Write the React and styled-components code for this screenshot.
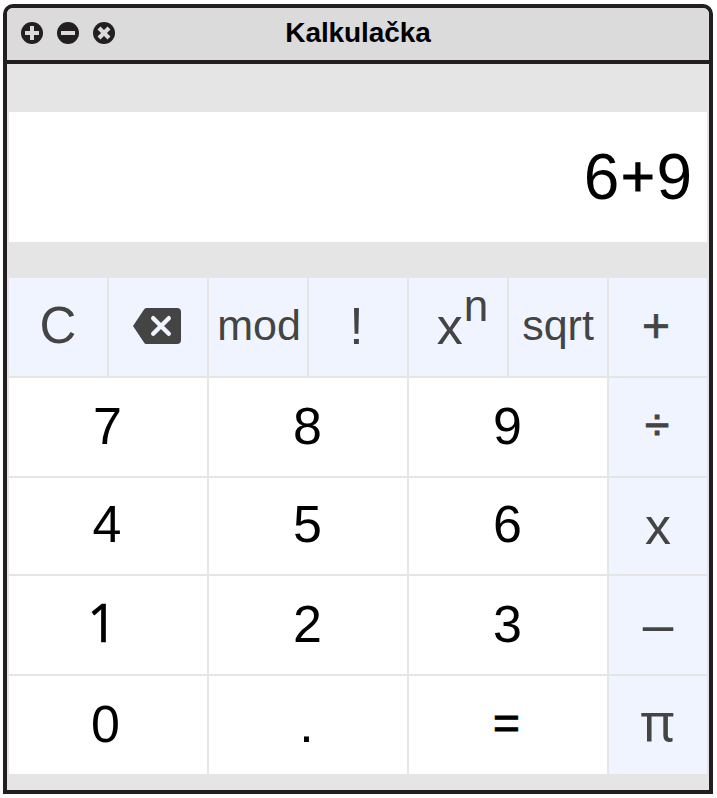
import React from "react";
import styled, { createGlobalStyle } from "styled-components";

const GlobalStyle = createGlobalStyle`
  * { box-sizing: border-box; }
  body { margin: 0; background: #fff; font-family: "Liberation Sans", Arial, sans-serif; }
`;

const Window = styled.main`
  width: 710px;
  height: 790px;
  margin: 4px 0 0 3px;
  border: 4px solid #231f20;
  border-radius: 10px 10px 0 0;
  background: #e5e5e5;
  overflow: hidden;
`;

const TitleBar = styled.header`
  display: grid;
  grid-template-columns: 1fr auto 1fr;
  align-items: center;
  height: 56px;
  padding: 0 14px;
  border-bottom: 4px solid #231f20;
  background: #dbdbdb;
`;

const Controls = styled.div`
  display: flex;
  gap: 14px;
  padding-bottom: 2px;
  svg { display: block; }
`;

const Title = styled.h1`
  margin: 0;
  padding-bottom: 2px;
  font-size: 28px;
  line-height: 32px;
  letter-spacing: -0.1px;
  font-weight: 700;
  color: #000;
`;

const Display = styled.output`
  display: flex;
  align-items: center;
  justify-content: flex-end;
  height: 130px;
  margin: 48px 2px 36px;
  padding-right: 15px;
  background: #fff;
  color: #000;
  font-size: 64px;
  line-height: 74px;
`;

const DisplayOperator = styled.span`
  width: 37px;
  padding-bottom: 2px;
  text-align: center;
  font-size: 58px;
  -webkit-text-stroke: 1px #000;
`;

const Keypad = styled.div`
  display: grid;
  grid-template-columns: repeat(7, 98px);
  grid-template-rows: 98px 98px 96px 98px 98px;
  gap: 2px;
  padding: 0 2px;
`;

const Key = styled.button`
  display: flex;
  align-items: center;
  justify-content: center;
  grid-column: span ${(p) => (p.$digit ? 2 : 1)};
  min-width: 0;
  margin: 0;
  border: 0;
  padding: ${(p) => p.$pad || (p.$digit ? "0 1px 3px 0" : "0 0 3px")};
  background: ${(p) => (p.$digit ? "#fff" : "#f0f4ff")};
  color: ${(p) => (p.$digit ? "#000" : "#444")};
  font-family: ${(p) => (p.$open ? '"Noto Sans", sans-serif' : "inherit")};
  font-size: ${(p) => p.$size || 52}px;
  line-height: 60px;
  white-space: nowrap;
  -webkit-text-stroke: ${(p) => p.$weight || 0}px currentColor;
`;

const Power = styled.span`
  display: flex;
  align-items: flex-start;
  gap: 1px;
`;

const Exponent = styled.span`
  font-size: 44px;
  line-height: 20px;
`;

const ControlIcon = ({ children }) => (
  <svg width="22" height="22" viewBox="0 0 22 22" aria-hidden="true">
    <circle cx="11" cy="11" r="11" fill="#231f20" />
    {children}
  </svg>
);

const BackspaceIcon = () => (
  <svg width="48" height="36" viewBox="0 0 48 36" aria-hidden="true">
    <path d="M13 0H44Q48 0 48 4V32Q48 36 44 36H13Q12 36 11 34.5L0 18L11 1.5Q12 0 13 0Z" fill="#444" />
    <path d="M20.2 10.2L35.8 25.8M35.8 10.2L20.2 25.8" stroke="#f0f4ff" strokeWidth="4.4" strokeLinecap="round" />
  </svg>
);

const keys = [
  { label: "C", size: 51, pad: "0 0 2px" },
  { label: "backspace", content: <BackspaceIcon />, pad: "0 2px 2px 0" },
  { label: "mod", size: 43, pad: "0 0 4px 2px" },
  { label: "!", pad: "0 3px 3px 0" },
  { label: "power", content: <Power>x<Exponent>n</Exponent></Power>, pad: "0 0 3px 9px" },
  { label: "sqrt", size: 43, pad: "0 0 4px" },
  { label: "+", size: 48, weight: 0.7, pad: "0 4px 2px 0" },
  { label: "7", digit: true },
  { label: "8", digit: true },
  { label: "9", digit: true },
  { label: "÷", size: 44, weight: 1.2, pad: "0 2px 5px 0" },
  { label: "4", digit: true, pad: "0 2px 5px 0" },
  { label: "5", digit: true, pad: "0 1px 5px 0" },
  { label: "6", digit: true, pad: "0 1px 5px 0" },
  { label: "x" , pad: "0" },
  { label: "1", digit: true, open: true, weight: 0.5, pad: "0 12px 6px 0" },
  { label: "2", digit: true },
  { label: "3", digit: true },
  { label: "–", size: 55 },
  { label: "0", digit: true, pad: "0 5px 3px 0" },
  { label: ".", digit: true, pad: "0 3px 3px 0" },
  { label: "=", digit: true, size: 46, weight: 1, pad: "0 3px 4px 0" },
  { label: "π", open: true, pad: "0 1px 8px 0" },
];

export default function App() {
  return (
    <>
      <GlobalStyle />
      <Window>
        <TitleBar>
          <Controls>
            <ControlIcon>
              <path d="M11 4V18M4 11H18" stroke="#dbdbdb" strokeWidth="4" />
            </ControlIcon>
            <ControlIcon>
              <path d="M4 11H18" stroke="#dbdbdb" strokeWidth="4" />
            </ControlIcon>
            <ControlIcon>
              <path d="M6 6L16 16M16 6L6 16" stroke="#dbdbdb" strokeWidth="4.2" />
            </ControlIcon>
          </Controls>
          <Title>Kalkulačka</Title>
        </TitleBar>
        <Display>
          6<DisplayOperator>+</DisplayOperator>9
        </Display>
        <Keypad>
          {keys.map((k) => (
            <Key
              key={k.label}
              $digit={k.digit}
              $size={k.size}
              $pad={k.pad}
              $open={k.open}
              $weight={k.weight}
              aria-label={k.label}
            >
              {k.content || k.label}
            </Key>
          ))}
        </Keypad>
      </Window>
    </>
  );
}
